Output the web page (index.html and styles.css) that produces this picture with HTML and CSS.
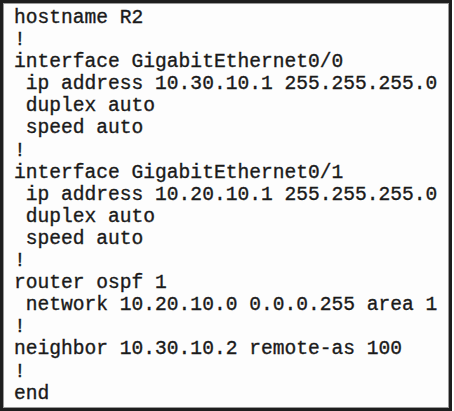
FILE: index.html
```html
<!DOCTYPE html>
<html>
<head>
<meta charset="utf-8">
<link rel="stylesheet" href="styles.css">
</head>
<body>
<div class="frame">
<pre class="config">hostname R2
!
interface GigabitEthernet0/0
 ip address 10.30.10.1 255.255.255.0
 duplex auto
 speed auto
!
interface GigabitEthernet0/1
 ip address 10.20.10.1 255.255.255.0
 duplex auto
 speed auto
!
router ospf 1
 network 10.20.10.0 0.0.0.255 area 1
!
neighbor 10.30.10.2 remote-as 100
!
end</pre>
</div>
</body>
</html>
```

FILE: styles.css
```css
html, body {
  margin: 0;
  padding: 0;
  background: #ffffff;
}

.frame {
  box-sizing: border-box;
  width: 452px;
  height: 411px;
  border: 3px solid #1e1e1e;
  box-shadow: inset 0 0 0 1px #9a9a9a;
  background: #fdfdfd;
  padding: 4px 0 0 11px;
}

.config {
  margin: 0;
  font-family: "Liberation Mono", "Courier New", monospace;
  font-size: 19.6px;
  line-height: 22.1px;
  color: #1a1a1a;
  -webkit-text-stroke: 0.35px #1a1a1a;
  white-space: pre;
}
```
